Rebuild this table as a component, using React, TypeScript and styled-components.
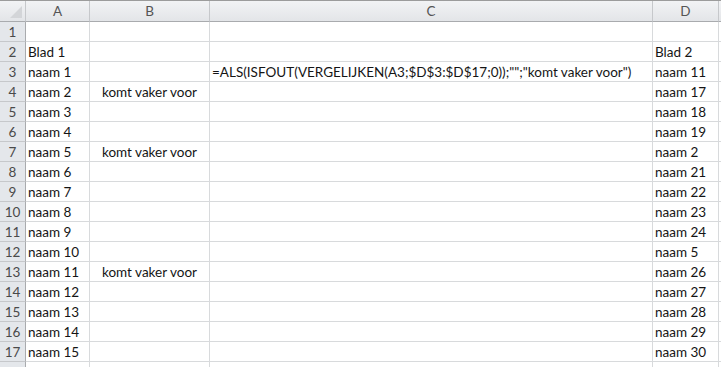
import styled, { createGlobalStyle } from 'styled-components';

const GlobalStyle = createGlobalStyle`
  html, body {
    margin: 0;
    padding: 0;
    background: #ffffff;
    overflow: hidden;
  }
  body {
    font-family: Lato, 'Liberation Sans', sans-serif;
  }
`;

const COLUMNS = ['A', 'B', 'C', 'D'];

type Row = [string, string, string, string];

const rows: Row[] = [
  ['', '', '', ''],
  ['Blad 1', '', '', 'Blad 2'],
  ['naam 1', '', '=ALS(ISFOUT(VERGELIJKEN(A3;$D$3:$D$17;0));"";"komt vaker voor")', 'naam 11'],
  ['naam 2', 'komt vaker voor', '', 'naam 17'],
  ['naam 3', '', '', 'naam 18'],
  ['naam 4', '', '', 'naam 19'],
  ['naam 5', 'komt vaker voor', '', 'naam 2'],
  ['naam 6', '', '', 'naam 21'],
  ['naam 7', '', '', 'naam 22'],
  ['naam 8', '', '', 'naam 23'],
  ['naam 9', '', '', 'naam 24'],
  ['naam 10', '', '', 'naam 5'],
  ['naam 11', 'komt vaker voor', '', 'naam 26'],
  ['naam 12', '', '', 'naam 27'],
  ['naam 13', '', '', 'naam 28'],
  ['naam 14', '', '', 'naam 29'],
  ['naam 15', '', '', 'naam 30'],
];

const Sheet = styled.div`
  display: grid;
  grid-template-columns: 26px 64px 120px 443px 66px 1fr;
  grid-auto-rows: 20px;
  grid-template-rows: 21px;
  border-top: 1px solid #9c9c9c;
  width: 721px;
  height: 367px;
  overflow: hidden;
  box-sizing: border-box;
`;

const ColHead = styled.div`
  background: linear-gradient(#f2f3f5, #e3e5e8);
  border-right: 1px solid #c6c8cb;
  border-bottom: 1px solid #a9abae;
  color: #555;
  font-size: 13.5px;
  display: flex;
  align-items: center;
  justify-content: center;
  box-sizing: border-box;
`;

const Corner = styled(ColHead)`
  position: relative;
  svg {
    position: absolute;
    right: 3px;
    bottom: 3px;
  }
`;

const RowHead = styled.div`
  background: #e4e7eb;
  border-right: 1px solid #a9abae;
  border-bottom: 1px solid #c6c8cb;
  color: #4a4a4a;
  font-size: 13.5px;
  display: flex;
  align-items: center;
  justify-content: center;
  box-sizing: border-box;
`;

const Cell = styled.div<{ $center?: boolean }>`
  border-right: 1px solid #d8dadc;
  border-bottom: 1px solid #d8dadc;
  color: #151515;
  font-size: 13.5px;
  white-space: nowrap;
  display: flex;
  align-items: center;
  justify-content: ${(p) => (p.$center ? 'center' : 'flex-start')};
  padding: 1px 2px 0;
  box-sizing: border-box;
  overflow: visible;
  position: relative;
`;

const emptyRow: Row = ['', '', '', ''];

export default function App() {
  return (
    <>
      <GlobalStyle />
      <Sheet>
        <Corner>
          <svg width="12" height="12" viewBox="0 0 12 12">
            <polygon points="12,0 12,12 0,12" fill="#d3d5d8" />
          </svg>
        </Corner>
        {COLUMNS.map((c) => (
          <ColHead key={c}>{c}</ColHead>
        ))}
        <ColHead />
        {rows.map((row, i) => (
          <Row key={i} label={String(i + 1)} row={row} />
        ))}
        {/* the next row only peeks in at the bottom edge */}
        <Row label="" row={emptyRow} />
      </Sheet>
    </>
  );
}

function Row({ label, row }: { label: string; row: Row }) {
  return (
    <>
      <RowHead>{label}</RowHead>
      {row.map((value, j) => (
        <Cell key={j} $center={j === 1}>
          {value}
        </Cell>
      ))}
      <Cell />
    </>
  );
}
